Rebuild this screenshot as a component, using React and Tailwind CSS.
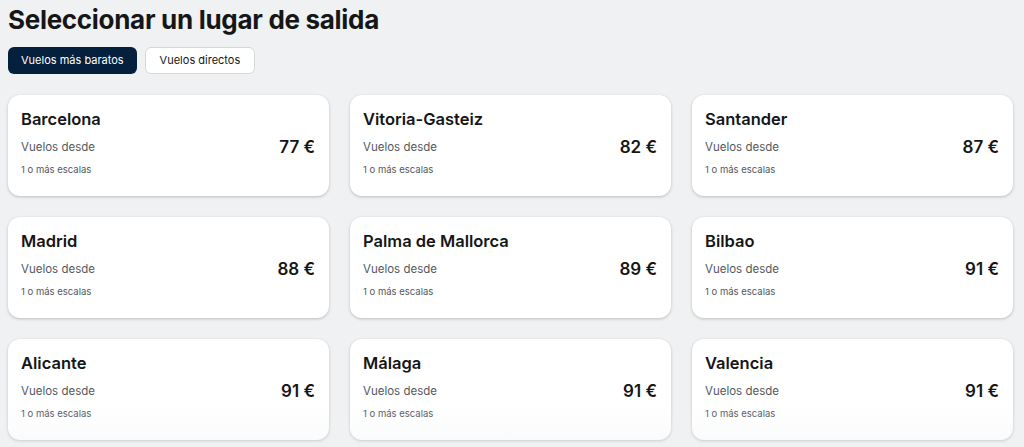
import React from "react";

const cities = [
  ["Barcelona", "77 €"],
  ["Vitoria-Gasteiz", "82 €"],
  ["Santander", "87 €"],
  ["Madrid", "88 €"],
  ["Palma de Mallorca", "89 €"],
  ["Bilbao", "91 €"],
  ["Alicante", "91 €"],
  ["Málaga", "91 €"],
  ["Valencia", "91 €"],
];

export default function App() {
  return (
    <div
      className="relative w-[1024px] h-[447px] overflow-hidden bg-[#eff1f2] text-[#161616]"
      style={{ fontFamily: "Inter, 'Noto Sans', sans-serif" }}
    >
      <div className="px-[8px] pt-[3px]">
        <h1 className="text-[26px] leading-[34px] font-bold tracking-[-0.3px]">
          Seleccionar un lugar de salida
        </h1>
        <div className="mt-[10px] flex gap-[8px]">
          <button className="h-[27px] px-[13px] rounded-[6px] bg-[#05203c] text-white text-[11px]">
            Vuelos más baratos
          </button>
          <button className="h-[27px] px-[14px] rounded-[6px] bg-white border border-[#d4d8dd] text-[#161616] text-[11px]">
            Vuelos directos
          </button>
        </div>
        <div className="mt-[21px] grid grid-cols-3 gap-x-[21px] gap-y-[21px] w-[1005px]">
          {cities.map(([name, price]) => (
            <div
              key={name}
              className="h-[101px] bg-white rounded-[12px] shadow-[0_1px_3px_rgba(37,32,31,0.25)] px-[13px] pt-[12px]"
            >
              <div className="text-[16.5px] leading-[24px] font-semibold">{name}</div>
              <div className="mt-[4px] flex items-center justify-between pr-[1px]">
                <span className="text-[11.5px] text-[#545860]">Vuelos desde</span>
                <span className="text-[17px] font-semibold">{price}</span>
              </div>
              <div className="mt-[2px] text-[9.5px] text-[#545860]">1 o más escalas</div>
            </div>
          ))}
        </div>
      </div>
      <div className="pointer-events-none absolute left-0 right-0 bottom-0 h-[40px] bg-gradient-to-b from-transparent to-[rgba(239,241,242,0.35)]" />
    </div>
  );
}
